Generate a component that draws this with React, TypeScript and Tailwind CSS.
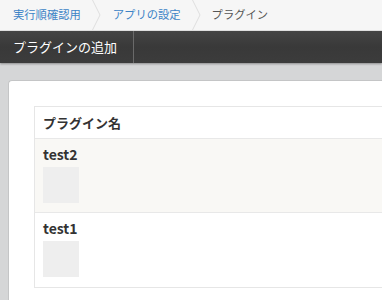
import React from "react";

const font = { fontFamily: '"Noto Sans CJK JP", "Noto Sans", sans-serif' };

function Chevron() {
  return (
    <svg width="9" height="30" viewBox="0 0 9 30" className="shrink-0">
      <polyline points="0.5,0 8,15 0.5,30" fill="none" stroke="#dedede" strokeWidth="1" />
    </svg>
  );
}

const plugins = [
  { name: "test2", shaded: true },
  { name: "test1", shaded: false },
];

export default function App() {
  return (
    <div className="w-full h-[300px] overflow-hidden bg-[#d5d6d7]" style={font}>
      {/* breadcrumb */}
      <div className="h-[31px] bg-[#f6f6f6] border-b border-[#e4e4e4] flex items-center text-[11.3px] leading-none">
        <span className="pl-[13px] pr-[11px] text-[#3d84c6]">実行順確認用</span>
        <Chevron />
        <span className="pl-[12px] pr-[11px] text-[#3d84c6]">アプリの設定</span>
        <Chevron />
        <span className="pl-[11px] text-[#555555]">プラグイン</span>
      </div>

      {/* toolbar */}
      <div className="h-[32px] flex bg-gradient-to-b from-[#444444] via-[#393939] to-[#3c3c3c] shadow-[0_1px_2px_rgba(0,0,0,0.35)]">
        <div className="w-[134px] flex items-center pl-[13px] text-white text-[13px] border-r border-[#6a6a6a]">
          プラグインの追加
        </div>
      </div>

      {/* content */}
      <div className="pt-[17px] pl-[8px]">
        <div className="bg-white rounded-tl-[4px] border-l border-t border-[#c4c5c6] pt-[25px] pl-[25px] mr-[-40px] h-[260px]">
          <div className="border border-[#e6e6e6]">
            <div className="h-[32px] flex items-center pl-[8px] text-[13px] font-bold text-[#333333] border-b border-[#e8e8e8]">
              プラグイン名
            </div>
            {plugins.map((p, i) => (
              <div
                key={p.name}
                className={`h-[74px] pl-[8px] pt-[5px] ${p.shaded ? "bg-[#f9f8f5]" : "bg-white"} ${i < plugins.length - 1 ? "border-b border-[#e8e8e8]" : ""}`}
              >
                <div className="text-[14px] leading-[20px] font-bold text-[#333333]">{p.name}</div>
                <div className="mt-[3px] w-[36px] h-[36px] bg-[#eeeeee]" />
              </div>
            ))}
          </div>
        </div>
      </div>
    </div>
  );
}
